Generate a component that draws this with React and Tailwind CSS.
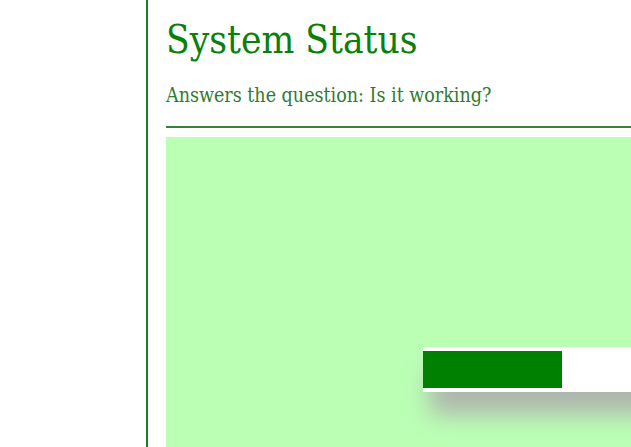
import React from 'react'

const App = () => {
  return (
    <div className="w-[631px] h-[447px] overflow-hidden bg-white flex" style={{ fontFamily: '"DejaVu Serif Condensed", "DejaVu Serif", serif' }}>
      <div className="w-[146px] shrink-0" />
      <div className="border-l-2 border-[#1f7f1f] pl-[18px] pt-[16px] shrink-0 w-[700px]">
        <h1 className="text-[38.5px] leading-[48px] text-[#0a7f0a] [font-stretch:condensed]">System Status</h1>
        <p className="mt-[20px] text-[19.5px] leading-[24px] text-[#2f7a2f] [font-stretch:condensed]">Answers the question: Is it working?</p>
        <div className="mt-[18px] h-[2px] bg-[#3b7f3b]" />
        <div className="mt-[9px] h-[400px] bg-[#bbffb5] pl-[257px] pt-[210px]">
          <div className="w-[300px] h-[45px] bg-white pt-[4px] shadow-[7px_22px_24px_0_rgba(172,172,172,0.9)]">
            <div className="w-[139px] h-[37px] bg-[#008000]" />
          </div>
        </div>
      </div>
    </div>
  )
}

export default App
